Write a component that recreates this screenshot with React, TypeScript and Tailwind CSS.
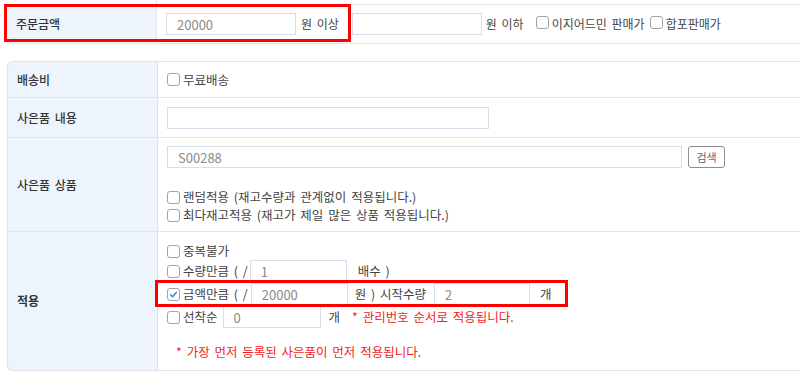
import React from 'react';

const Checkbox = ({ checked = false }: { checked?: boolean }) => (
  <span className="inline-flex h-[13px] w-[13px] shrink-0 items-center justify-center rounded-[3px] border border-[#a3a3a3] bg-white">
    {checked && (
      <svg viewBox="0 0 12 12" className="h-[9px] w-[9px]">
        <path d="M2 6.3 4.8 9 10 3" fill="none" stroke="#2f7de1" strokeWidth="1.8" strokeLinecap="round" strokeLinejoin="round" />
      </svg>
    )}
  </span>
);

type FieldProps = { value?: string; className?: string };

const Field = ({ value = '', className = '' }: FieldProps) => (
  <input
    readOnly
    value={value}
    className={`h-[22px] shrink-0 border border-[#d3dfeb] bg-white pl-[10px] text-[13px] text-[#8a8a8a] outline-none [word-spacing:0] ${className}`}
  />
);

const Label = ({ children, bold = false }: { children: React.ReactNode; bold?: boolean }) => (
  <div
    className={`flex w-[150px] shrink-0 items-center border-r border-[#dfe4ea] bg-[#eef4fc] pl-[9px] text-[12px] text-[#333] ${bold ? 'font-bold' : 'font-medium'}`}
  >
    {children}
  </div>
);

export default function App() {
  return (
    <div className="relative h-[373px] w-[800px] overflow-hidden bg-white font-['Noto_Sans_CJK_KR','Noto_Sans',sans-serif] text-[12.5px] leading-[18px] text-[#444] [word-spacing:2px]">
      {/* top table, cut off above */}
      <div className="ml-[7px] text-[12px]">
        <div className="flex h-[4px]">
          <div className="w-[150px] border-r border-[#dfe4ea]" />
        </div>
        <div className="flex h-[40px] border-y border-[#dfe4ea]">
          <Label>주문금액</Label>
          <div className="flex items-center pl-[9px]">
            <Field value="20000" className="w-[130px]" />
            <span className="ml-[5px]">원 이상</span>
            <Field className="ml-[13px] w-[130px]" />
            <span className="ml-[4px]">원 이하</span>
            <span className="ml-[12px]">
              <Checkbox />
            </span>
            <span className="ml-[3px]">이지어드민 판매가</span>
            <span className="ml-[5px]">
              <Checkbox />
            </span>
            <span className="ml-[3px]">합포판매가</span>
          </div>
        </div>
      </div>

      {/* gift table */}
      <div className="ml-[7px] mt-[17px] overflow-hidden rounded-l-[6px] border-y border-l border-[#dfe4ea]">
        <div className="flex h-[36px] border-b border-[#dfe4ea]">
          <Label>배송비</Label>
          <div className="flex items-center pl-[9px]">
            <Checkbox />
            <span className="ml-[3px]">무료배송</span>
          </div>
        </div>

        <div className="flex h-[40px] border-b border-[#dfe4ea]">
          <Label>사은품 내용</Label>
          <div className="flex items-center pl-[9px]">
            <Field className="w-[322px]" />
          </div>
        </div>

        <div className="flex h-[94px] border-b border-[#dfe4ea]">
          <Label>사은품 상품</Label>
          <div className="flex flex-col pl-[9px] pt-[8px]">
            <div className="flex items-center">
              <Field value="S00288" className="w-[515px]" />
              <button className="ml-[6px] h-[22px] w-[37px] rounded-[3px] border border-[#8d8d8d] bg-white text-[11px] text-[#666]">
                검색
              </button>
            </div>
            <div className="mt-[20px] flex items-center">
              <Checkbox />
              <span className="ml-[3px]">랜덤적용 (재고수량과 관계없이 적용됩니다.)</span>
            </div>
            <div className="flex items-center">
              <Checkbox />
              <span className="ml-[3px]">최다재고적용 (재고가 제일 많은 상품 적용됩니다.)</span>
            </div>
          </div>
        </div>

        <div className="flex h-[138px]">
          <Label bold>적용</Label>
          <div className="flex flex-col pl-[9px] pt-[10px]">
            <div className="flex h-[18px] items-center">
              <Checkbox />
              <span className="ml-[3px]">중복불가</span>
            </div>
            <div className="flex h-[22px] items-center">
              <Checkbox />
              <span className="ml-[3px]">수량만큼 ( /</span>
              <Field value="1" className="ml-[2px] w-[97px]" />
              <span className="ml-[11px]">배수 )</span>
            </div>
            <div className="mt-[1px] flex h-[22px] items-center">
              <Checkbox checked />
              <span className="ml-[3px]">금액만큼 ( /</span>
              <Field value="20000" className="ml-[3px] w-[97px]" />
              <span className="ml-[7px]">원 ) 시작수량</span>
              <Field value="2" className="ml-[8px] w-[96px]" />
              <span className="ml-[10px]">개</span>
            </div>
            <div className="mt-[1px] flex h-[22px] items-center">
              <Checkbox />
              <span className="ml-[3px]">선착순</span>
              <Field value="0" className="ml-[5px] w-[98px]" />
              <span className="ml-[8px]">개</span>
              <span className="ml-[12px] text-[#f21c1c]">* 관리번호 순서로 적용됩니다.</span>
            </div>
            <div className="ml-[9px] mt-[15px] flex h-[18px] items-center text-[#f21c1c]">
              * 가장 먼저 등록된 사은품이 먼저 적용됩니다.
            </div>
          </div>
        </div>
      </div>

      {/* red highlight annotations */}
      <div className="pointer-events-none absolute left-[4px] top-[4px] h-[38px] w-[347px] border-[3px] border-[#ff0000]" />
      <div className="pointer-events-none absolute left-[155px] top-[280px] h-[27px] w-[413px] border-[3px] border-[#ff0000]" />
    </div>
  );
}
